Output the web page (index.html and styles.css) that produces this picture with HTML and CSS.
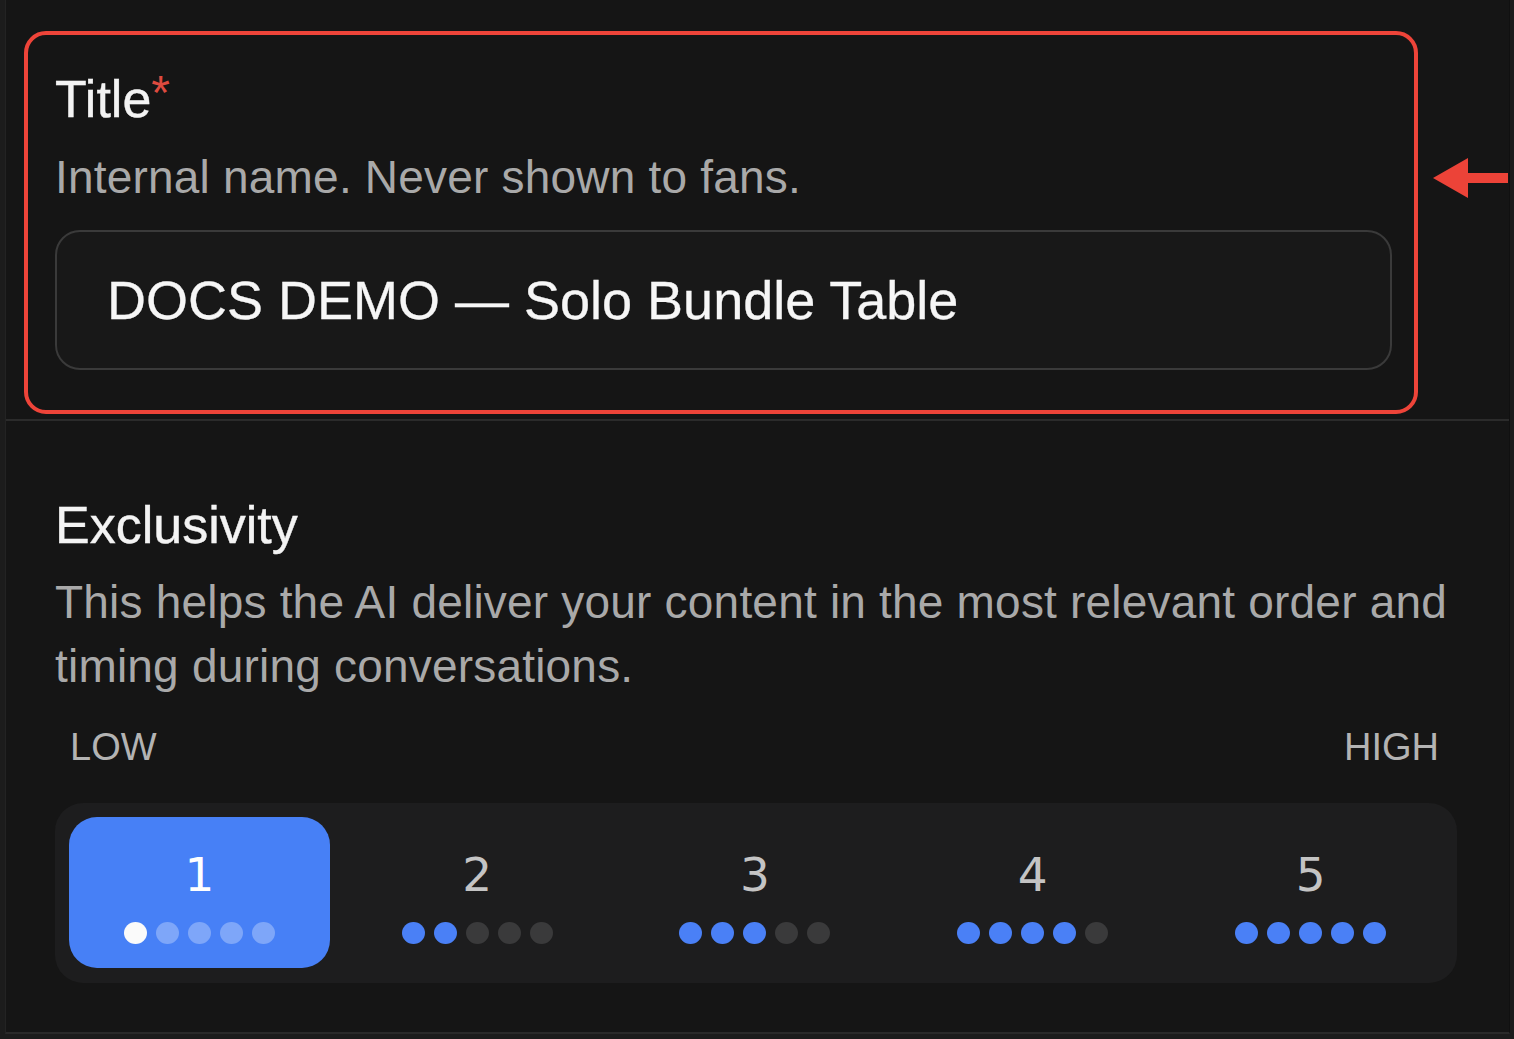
FILE: index.html
```html
<!DOCTYPE html>
<html lang="en">
<head>
<meta charset="utf-8">
<title>Title and Exclusivity</title>
<link rel="stylesheet" href="styles.css">
</head>
<body>
<div class="panel">
  <section class="title-section">
    <div class="highlight">
      <div class="field-label">Title<span class="req">*</span></div>
      <div class="field-help">Internal name. Never shown to fans.</div>
      <div class="text-input">DOCS DEMO — Solo Bundle Table</div>
    </div>
    <svg class="arrow" width="75" height="42" viewBox="0 0 75 42" aria-hidden="true">
      <polygon points="0,21 35,1 35,16 75,16 75,26 35,26 35,41" fill="#ec4338"/>
    </svg>
  </section>
  <section class="excl-section">
    <div class="field-label">Exclusivity</div>
    <div class="field-help">This helps the AI deliver your content in the most relevant order and timing during conversations.</div>
    <div class="scale-labels"><span>LOW</span><span>HIGH</span></div>
    <div class="rating">
      <div class="opt selected">
        <div class="num">1</div>
        <div class="dots"><i class="on"></i><i></i><i></i><i></i><i></i></div>
      </div>
      <div class="opt">
        <div class="num">2</div>
        <div class="dots"><i class="on"></i><i class="on"></i><i></i><i></i><i></i></div>
      </div>
      <div class="opt">
        <div class="num">3</div>
        <div class="dots"><i class="on"></i><i class="on"></i><i class="on"></i><i></i><i></i></div>
      </div>
      <div class="opt">
        <div class="num">4</div>
        <div class="dots"><i class="on"></i><i class="on"></i><i class="on"></i><i class="on"></i><i></i></div>
      </div>
      <div class="opt">
        <div class="num">5</div>
        <div class="dots"><i class="on"></i><i class="on"></i><i class="on"></i><i class="on"></i><i class="on"></i></div>
      </div>
    </div>
  </section>
</div>
</body>
</html>
```
FILE: styles.css
```css
html, body {
  margin: 0;
  padding: 0;
}
body {
  background: #1c1c1c;
  width: 1514px;
  height: 1039px;
  overflow: hidden;
  font-family: "Liberation Sans", Arial, sans-serif;
}
.panel {
  margin-left: 5px;
  width: 1505px;
  height: 1034px;
  box-sizing: border-box;
  background: #151515;
  border-left: 1px solid #232323;
  border-right: 1px solid #101010;
  border-bottom: 2px solid #2a2a2a;
}
.title-section {
  display: flex;
  align-items: flex-start;
  padding: 31px 0 5px 18px;
  border-bottom: 2px solid #2b2b2b;
}
.highlight {
  width: 1394px;
  box-sizing: border-box;
  border: 4px solid #ee4439;
  border-radius: 22px;
  padding: 34px 22px 40px 27px;
}
.arrow {
  display: block;
  margin-left: 15px;
  margin-top: 126px;
}
.field-label {
  font-size: 52px;
  line-height: 60px;
  color: #f3f3f3;
  -webkit-text-stroke: 0.4px #f3f3f3;
}
.req {
  color: #de4a3f;
  font-size: 48px;
  line-height: 48px;
  vertical-align: top;
  -webkit-text-stroke: 0;
}
.field-help {
  margin-top: 16px;
  font-size: 46px;
  line-height: 64px;
  letter-spacing: 0.2px;
  color: #a9a9a9;
}
.text-input {
  margin-top: 21px;
  height: 140px;
  box-sizing: border-box;
  border: 2px solid #3a3a3a;
  border-radius: 25px;
  background: #181818;
  display: flex;
  align-items: center;
  padding-left: 50px;
  font-size: 54px;
  color: #f6f6f6;
  -webkit-text-stroke: 0.3px #f6f6f6;
}
.excl-section {
  padding: 74px 52px 0 49px;
}
.excl-section .field-help {
  margin-top: 15px;
}
.scale-labels {
  margin-top: 27px;
  display: flex;
  justify-content: space-between;
  padding: 0 18px 0 15px;
  font-size: 38px;
  line-height: 44px;
  color: #b3b3b3;
}
.rating {
  margin-top: 34px;
  display: grid;
  grid-template-columns: repeat(5, 1fr);
  gap: 17px;
  padding: 14px 16px 15px 14px;
  background: #1d1d1e;
  border-radius: 28px;
}
.opt {
  height: 151px;
  box-sizing: border-box;
  border-radius: 28px;
  padding-top: 33px;
  display: flex;
  flex-direction: column;
  align-items: center;
  gap: 22px;
}
.opt.selected {
  background: #4780f6;
}
.num {
  font-family: "DejaVu Sans", sans-serif;
  font-size: 47px;
  line-height: 50px;
  color: #c4c4c4;
}
.selected .num {
  color: #ffffff;
}
.dots {
  display: flex;
  gap: 9px;
}
.dots i {
  display: block;
  width: 23px;
  height: 22px;
  border-radius: 50%;
  background: #3a3a3b;
}
.dots i.on {
  background: #4a80f6;
}
.selected .dots i {
  background: rgba(255, 255, 255, 0.3);
}
.selected .dots i.on {
  background: #fafafa;
}
```
